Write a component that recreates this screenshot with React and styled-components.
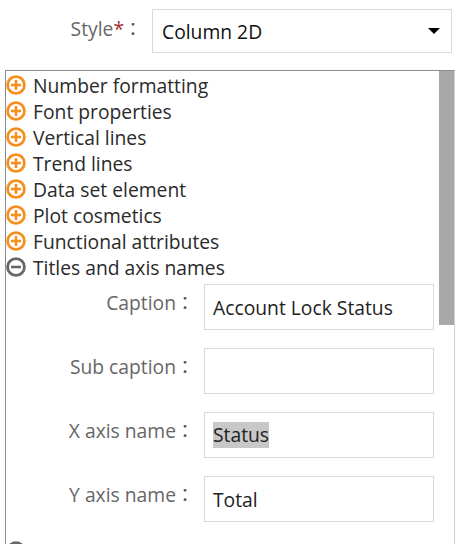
import React from 'react';
import styled, { createGlobalStyle } from 'styled-components';

const GlobalStyle = createGlobalStyle`
	html, body {
		margin: 0;
		padding: 0;
		background: #ffffff;
		overflow: hidden;
		font-family: 'Open Sans', 'Noto Sans CJK TC', sans-serif;
	}
`;

const groups = [
	'Number formatting',
	'Font properties',
	'Vertical lines',
	'Trend lines',
	'Data set element',
	'Plot cosmetics',
	'Functional attributes',
];

const fields = [
	{ label: 'Caption', value: 'Account Lock Status' },
	{ label: 'Sub caption', value: '' },
	{ label: 'X axis name', value: 'Status', selected: true },
	{ label: 'Y axis name', value: 'Total' },
];

const ToggleIcon = ({ open }) => {
	const color = open ? '#666666' : '#f5901e';
	return (
		<StyledIcon viewBox="0 0 20 20">
			<circle cx="10" cy="10" r="8.4" fill="none" stroke={color} strokeWidth="2.8" />
			<line x1="5" y1="10" x2="15" y2="10" stroke={color} strokeWidth="2.6" />
			{!open && <line x1="10" y1="5" x2="10" y2="15" stroke={color} strokeWidth="2.6" />}
		</StyledIcon>
	);
};

const App = () => {
	return (
		<StyledPage>
			<GlobalStyle />
			<StyledStyleRow>
				<StyledLabel>
					Style<StyledStar>*</StyledStar>
					<StyledColon>：</StyledColon>
				</StyledLabel>
				<StyledSelect>
					<span>Column 2D</span>
					<StyledCaret />
				</StyledSelect>
			</StyledStyleRow>

			<StyledPanel>
				<StyledContent>
					{groups.map((g) => (
						<StyledItem key={g}>
							<ToggleIcon />
							<span>{g}</span>
						</StyledItem>
					))}
					<StyledItem>
						<ToggleIcon open />
						<span>Titles and axis names</span>
					</StyledItem>

					<StyledForm>
						{fields.map((f) => (
							<React.Fragment key={f.label}>
								<StyledFieldLabel>
									{f.label}
									<StyledColon>：</StyledColon>
								</StyledFieldLabel>
								<StyledInput>
									{f.selected ? <StyledSelection>{f.value}</StyledSelection> : f.value}
								</StyledInput>
							</React.Fragment>
						))}
					</StyledForm>

					<StyledItem>
						<ToggleIcon open />
					</StyledItem>
				</StyledContent>
				<StyledScrollbar>
					<StyledThumb />
				</StyledScrollbar>
			</StyledPanel>
		</StyledPage>
	);
};

export default App;

const StyledPage = styled.div`
	width: 471px;
	height: 544px;
	overflow: hidden;
	padding-top: 9px;
	box-sizing: border-box;
`;

const StyledStyleRow = styled.div`
	display: grid;
	grid-template-columns: 142px 300px;
	column-gap: 10px;
	align-items: start;
`;

const StyledLabel = styled.div`
	text-align: right;
	font-size: 19.3px;
	line-height: 26px;
	padding-top: 6px;
	color: #666666;
	white-space: nowrap;
`;

const StyledStar = styled.span`
	color: #a3292e;
`;

const StyledColon = styled.span`
	font-family: 'Noto Sans CJK TC', sans-serif;
	font-size: 18px;
	color: #555555;
`;

const StyledSelect = styled.div`
	height: 44px;
	box-sizing: border-box;
	border: 1px solid #d9d9d9;
	display: flex;
	align-items: center;
	justify-content: space-between;
	padding: 0 11px 0 9px;
	font-size: 19.3px;
	color: #111111;
`;

const StyledCaret = styled.span`
	width: 0;
	height: 0;
	border-left: 6px solid transparent;
	border-right: 6px solid transparent;
	border-top: 6px solid #000000;
`;

const StyledPanel = styled.div`
	margin: 17px 0 0 5px;
	width: 450px;
	height: 520px;
	box-sizing: border-box;
	border-top: 1px solid #8c8c8c;
	border-left: 1px solid #8c8c8c;
	border-right: 1px solid #d0d0d0;
	display: flex;
`;

const StyledContent = styled.div`
	flex: 1;
	padding-top: 1px;
`;

const StyledItem = styled.div`
	display: flex;
	align-items: center;
	gap: 7px;
	height: 26px;
	font-size: 19.3px;
	color: #2a2a2a;
	white-space: nowrap;
`;

const StyledIcon = styled.svg`
	flex-shrink: 0;
	display: block;
	width: 20px;
	height: 20px;
`;

const StyledForm = styled.div`
	display: grid;
	grid-template-columns: 188px 230px;
	column-gap: 10px;
	row-gap: 18px;
	padding: 4px 0 16px;
`;

const StyledFieldLabel = styled.div`
	text-align: right;
	font-size: 19.3px;
	line-height: 26px;
	padding-top: 5px;
	color: #666666;
	white-space: nowrap;
`;

const StyledInput = styled.div`
	height: 46px;
	box-sizing: border-box;
	border: 1px solid #d9d9d9;
	padding: 0 8px;
	display: flex;
	align-items: center;
	font-size: 19.3px;
	color: #222222;
`;

const StyledSelection = styled.span`
	background: #c8c8c8;
	line-height: 26px;
`;

const StyledScrollbar = styled.div`
	width: 15px;
	flex-shrink: 0;
`;

const StyledThumb = styled.div`
	height: 254px;
	background: #a8a8a8;
`;
